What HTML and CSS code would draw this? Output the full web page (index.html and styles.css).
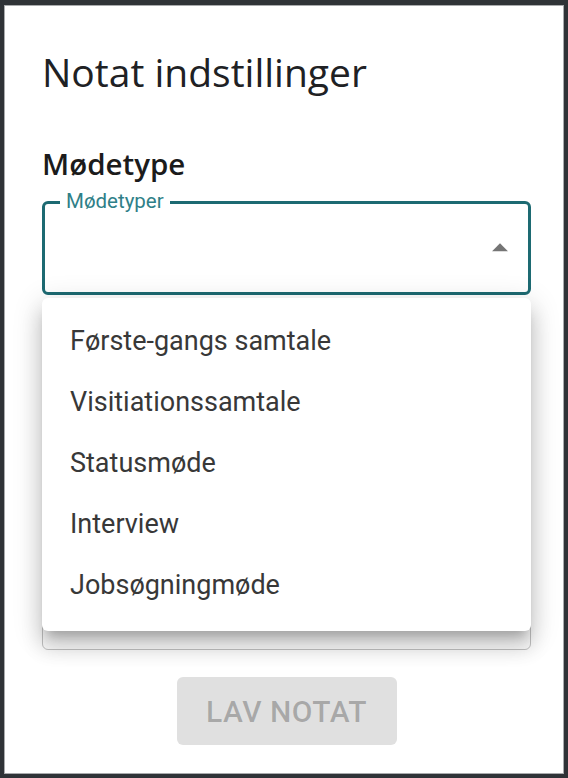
FILE: index.html
```html
<!DOCTYPE html>
<html lang="da">
<head>
<meta charset="utf-8">
<title>Notat indstillinger</title>
<link rel="stylesheet" href="styles.css">
</head>
<body>
<div class="frame">
  <h1 class="title">Notat indstillinger</h1>
  <h2 class="section">Mødetype</h2>
  <div class="field field-focused">
    <span class="field-label">Mødetyper</span>
    <svg class="arrow" viewBox="0 0 24 24" width="38" height="38" aria-hidden="true"><path d="M7 14l5-5 5 5z"/></svg>
  </div>
  <div class="field field-notes"></div>
  <div class="actions">
    <button class="btn" disabled>LAV NOTAT</button>
  </div>
  <ul class="menu">
    <li class="menu-item">Første-gangs samtale</li>
    <li class="menu-item">Visitiationssamtale</li>
    <li class="menu-item">Statusmøde</li>
    <li class="menu-item">Interview</li>
    <li class="menu-item">Jobsøgningmøde</li>
  </ul>
</div>
</body>
</html>
```

FILE: styles.css
```css
* { box-sizing: border-box; }
html, body { margin: 0; padding: 0; background: #2f3337; }
.frame {
  position: relative;
  width: 568px;
  height: 778px;
  background: #fff;
  border: 4px solid #2f3337;
  border-top-width: 5px;
  border-bottom-width: 4px;
  box-shadow: inset 0 0 0 1px #a9abad;
  padding: 47px 33px 0 38px;
  font-family: "Roboto", "Liberation Sans", sans-serif;
}
.title {
  margin: 0;
  font-family: "Open Sans", "Noto Sans", sans-serif;
  font-weight: 400;
  font-size: 39px;
  line-height: 39px;
  color: #202124;
}
.section {
  margin: 58px 0 0 0;
  font-family: "Open Sans", "Noto Sans", sans-serif;
  font-weight: 600;
  font-size: 29.5px;
  line-height: 30px;
  color: #1b1b1b;
}
.field {
  position: relative;
  height: 94px;
  border-radius: 6px;
}
.field-focused {
  margin-top: 22px;
  border: 3px solid #1d6a72;
}
.field-label {
  position: absolute;
  left: 15px;
  top: -14px;
  padding: 0 6px;
  background: #fff;
  font-size: 20.5px;
  line-height: 22px;
  color: #2f7f88;
}
.arrow {
  position: absolute;
  right: 9px;
  top: 25px;
  fill: #757575;
}
.field-notes {
  margin-top: 20px;
  height: 335px;
  border: 1.5px solid #c4c4c4;
}
.actions {
  display: flex;
  justify-content: center;
  margin-top: 27px;
}
.btn {
  width: 220px;
  height: 68px;
  border: 0;
  border-radius: 6px;
  background: #e0e0e0;
  color: rgba(0, 0, 0, 0.26);
  font-family: "Roboto", "Liberation Sans", sans-serif;
  font-weight: 500;
  font-size: 30px;
  letter-spacing: 0.5px;
  padding: 0;
}
.menu {
  position: absolute;
  left: 38px;
  top: 293px;
  width: 489px;
  margin: 0;
  padding: 12px 0 16px;
  list-style: none;
  background: #fff;
  border-radius: 6px;
  box-shadow: 0 10px 10px -6px rgba(0,0,0,0.2), 0 16px 20px 2px rgba(0,0,0,0.14), 0 6px 28px 4px rgba(0,0,0,0.12);
}
.menu-item {
  height: 61px;
  padding: 0 28px;
  display: flex;
  align-items: center;
  font-size: 27px;
  color: #383838;
}
```
